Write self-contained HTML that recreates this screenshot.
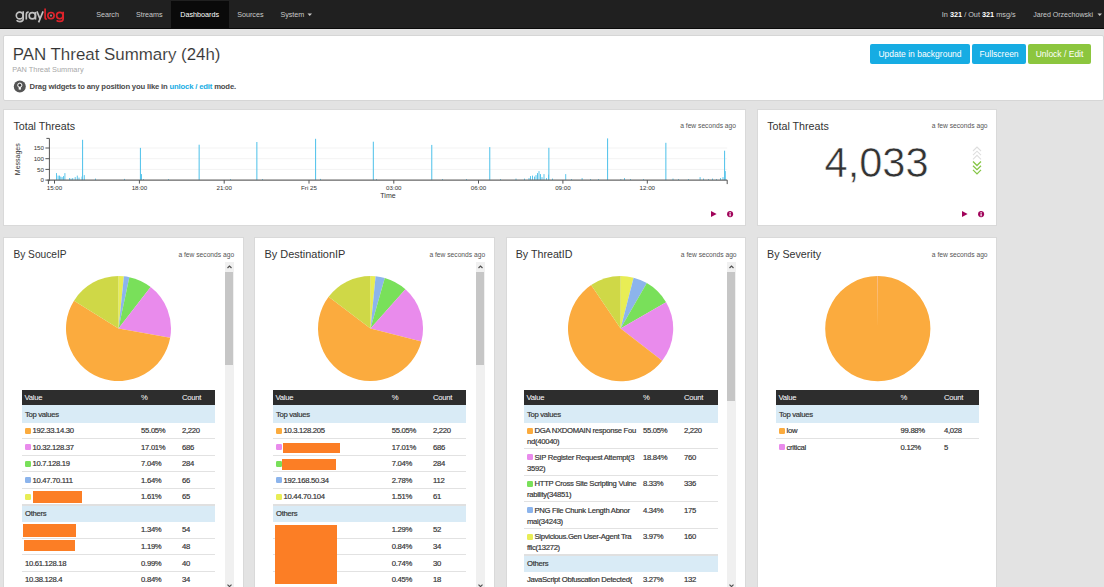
<!DOCTYPE html><html><head><meta charset="utf-8"><style>
html,body{margin:0;padding:0;width:1104px;height:587px;overflow:hidden;background:#e3e3e3;font-family:"Liberation Sans", sans-serif;}
.t{position:absolute;white-space:nowrap;}
.r{position:absolute;}
svg{position:absolute;}
</style></head><body>
<div class="r" style="left:0px;top:0px;width:1104px;height:28px;background:#202020;"></div>
<div class="r" style="left:0px;top:28px;width:1104px;height:1px;background:#0a0a0a;"></div>
<div class="r" style="left:171px;top:1px;width:58px;height:27px;background:#0a0a0a;"></div>
<svg style="left:0;top:0" width="80" height="28" fill="none" stroke-width="1.65" stroke-linecap="butt"><g stroke="#c2c2c2"><circle cx="19.7" cy="15.5" r="3.4"/><path d="M23.2 11.3 L23.2 19 C23.2 21.2 21.8 21.6 19.8 21.6 C18.3 21.6 17.3 21.1 16.6 20.3"/><path d="M26.3 19.6 L26.3 14.4 C26.3 12.6 27.3 12 28.7 12"/><circle cx="32.3" cy="15.7" r="3.1"/><path d="M35.5 11.9 L35.5 19.6"/><path d="M36.9 11.4 L39.9 18.6 M43.1 11.4 L38.6 22.4"/></g><g stroke="#e1232b"><path d="M45.1 8.5 L45.1 17.4 C45.1 18.6 45.6 19.1 46.8 19.1"/><circle cx="51" cy="15.6" r="3.15"/><circle cx="59.8" cy="15.5" r="3.2"/><path d="M63.2 11.7 L63.2 18.7 C63.2 20.9 61.9 21.4 59.9 21.4 C58.4 21.4 57.3 21 56.6 20.3"/></g><circle cx="51" cy="15.6" r="1.1" fill="#8a8a8a" stroke="none"/></svg>
<svg style="left:307px;top:13px" width="6" height="4"><path d="M0.5 0.5 L5 0.5 L2.75 3 Z" fill="#c9c9c9"/></svg>
<svg style="left:1096.5px;top:13px" width="6" height="4"><path d="M0.5 0.5 L5 0.5 L2.75 3 Z" fill="#c9c9c9"/></svg>
<div class="r" style="left:3px;top:35px;width:1099px;height:64px;background:#fff;border:1px solid #d6d6d6;border-radius:2px"></div>
<svg style="left:13px;top:80px" width="14" height="14"><circle cx="6.8" cy="6.5" r="6" fill="#555"/><circle cx="6.8" cy="5.2" r="2.1" fill="none" stroke="#fff" stroke-width="1"/><circle cx="6.8" cy="5.2" r="0.9" fill="#333"/><rect x="5.7" y="7.2" width="2.2" height="2.4" fill="#fff"/></svg>
<div class="r" style="left:870px;top:44px;width:100px;height:20px;background:#16ace3;border-radius:2px"></div>
<div class="r" style="left:972px;top:44px;width:54px;height:20px;background:#16ace3;border-radius:2px"></div>
<div class="r" style="left:1028px;top:44px;width:63px;height:20px;background:#8cc63e;border-radius:2px"></div>
<div class="r" style="left:3px;top:109px;width:741px;height:115px;background:#fff;border:1px solid #d9d9d9"></div>
<div class="r" style="left:757px;top:109px;width:238px;height:115px;background:#fff;border:1px solid #d9d9d9"></div>
<div class="r" style="left:3px;top:237px;width:239px;height:361px;background:#fff;border:1px solid #d9d9d9"></div>
<div class="r" style="left:254px;top:237px;width:239px;height:361px;background:#fff;border:1px solid #d9d9d9"></div>
<div class="r" style="left:506px;top:237px;width:238px;height:361px;background:#fff;border:1px solid #d9d9d9"></div>
<div class="r" style="left:757px;top:237px;width:238px;height:361px;background:#fff;border:1px solid #d9d9d9"></div>
<svg style="left:0;top:0" width="1104" height="240"><line x1="49.4" x2="727.2" y1="169.4" y2="169.4" stroke="#f3f3f3" stroke-width="1"/><line x1="49.4" x2="727.2" y1="158.7" y2="158.7" stroke="#f3f3f3" stroke-width="1"/><line x1="49.4" x2="727.2" y1="148.0" y2="148.0" stroke="#f3f3f3" stroke-width="1"/><rect x="82.0" y="139.8" width="1.1" height="40.3" fill="#5cc6ec"/><rect x="139.9" y="147.9" width="1.1" height="32.2" fill="#5cc6ec"/><rect x="198.6" y="144.7" width="1.1" height="35.4" fill="#5cc6ec"/><rect x="256.3" y="142.0" width="1.1" height="38.1" fill="#5cc6ec"/><rect x="315.0" y="138.8" width="1.1" height="41.3" fill="#5cc6ec"/><rect x="372.8" y="141.7" width="1.1" height="38.4" fill="#5cc6ec"/><rect x="431.2" y="144.9" width="1.1" height="35.2" fill="#5cc6ec"/><rect x="489.2" y="147.1" width="1.1" height="33.0" fill="#5cc6ec"/><rect x="548.3" y="147.8" width="1.1" height="32.3" fill="#5cc6ec"/><rect x="607.0" y="138.4" width="1.1" height="41.7" fill="#5cc6ec"/><rect x="665.3" y="142.8" width="1.1" height="37.3" fill="#5cc6ec"/><rect x="724.0" y="150.7" width="1.1" height="29.4" fill="#5cc6ec"/><rect x="56.0" y="173.1" width="1" height="7.0" fill="#5cc6ec"/><rect x="57.6" y="175.6" width="1" height="4.5" fill="#5cc6ec"/><rect x="59.0" y="175.6" width="1" height="4.5" fill="#5cc6ec"/><rect x="60.3" y="176.6" width="1" height="3.5" fill="#5cc6ec"/><rect x="61.6" y="177.1" width="1" height="3.0" fill="#5cc6ec"/><rect x="63.0" y="176.1" width="1" height="4.0" fill="#5cc6ec"/><rect x="64.4" y="173.1" width="1" height="7.0" fill="#5cc6ec"/><rect x="69.0" y="178.1" width="1" height="2.0" fill="#5cc6ec"/><rect x="70.5" y="178.6" width="1" height="1.5" fill="#5cc6ec"/><rect x="72.2" y="178.1" width="1" height="2.0" fill="#5cc6ec"/><rect x="74.7" y="177.1" width="1" height="3.0" fill="#5cc6ec"/><rect x="76.8" y="175.6" width="1" height="4.5" fill="#5cc6ec"/><rect x="78.5" y="177.6" width="1" height="2.5" fill="#5cc6ec"/><rect x="81.5" y="176.6" width="1" height="3.5" fill="#5cc6ec"/><rect x="83.8" y="175.1" width="1" height="5.0" fill="#5cc6ec"/><rect x="95.0" y="178.6" width="1" height="1.5" fill="#5cc6ec"/><rect x="124.0" y="178.9" width="1" height="1.2" fill="#5cc6ec"/><rect x="141.0" y="174.1" width="1" height="6.0" fill="#5cc6ec"/><rect x="143.0" y="179.1" width="1" height="1.0" fill="#5cc6ec"/><rect x="168.0" y="179.1" width="1" height="1.0" fill="#5cc6ec"/><rect x="230.0" y="179.1" width="1" height="1.0" fill="#5cc6ec"/><rect x="262.0" y="179.1" width="1" height="1.0" fill="#5cc6ec"/><rect x="320.0" y="178.9" width="1" height="1.2" fill="#5cc6ec"/><rect x="376.0" y="179.1" width="1" height="1.0" fill="#5cc6ec"/><rect x="442.0" y="179.1" width="1" height="1.0" fill="#5cc6ec"/><rect x="466.0" y="179.1" width="1" height="1.0" fill="#5cc6ec"/><rect x="500.0" y="179.1" width="1" height="1.0" fill="#5cc6ec"/><rect x="515.5" y="178.6" width="1" height="1.5" fill="#5cc6ec"/><rect x="524.0" y="178.6" width="1" height="1.5" fill="#5cc6ec"/><rect x="528.5" y="178.1" width="1" height="2.0" fill="#5cc6ec"/><rect x="530.0" y="176.1" width="1" height="4.0" fill="#5cc6ec"/><rect x="532.0" y="175.6" width="1" height="4.5" fill="#5cc6ec"/><rect x="534.0" y="176.6" width="1" height="3.5" fill="#5cc6ec"/><rect x="535.5" y="175.1" width="1" height="5.0" fill="#5cc6ec"/><rect x="537.0" y="173.1" width="1" height="7.0" fill="#5cc6ec"/><rect x="538.5" y="171.1" width="1" height="9.0" fill="#5cc6ec"/><rect x="540.0" y="174.1" width="1" height="6.0" fill="#5cc6ec"/><rect x="541.5" y="177.1" width="1" height="3.0" fill="#5cc6ec"/><rect x="543.5" y="174.1" width="1" height="6.0" fill="#5cc6ec"/><rect x="546.0" y="178.1" width="1" height="2.0" fill="#5cc6ec"/><rect x="548.0" y="174.6" width="1" height="5.5" fill="#5cc6ec"/><rect x="552.0" y="178.6" width="1" height="1.5" fill="#5cc6ec"/><rect x="565.2" y="174.1" width="1" height="6.0" fill="#5cc6ec"/><rect x="571.0" y="179.1" width="1" height="1.0" fill="#5cc6ec"/><rect x="581.6" y="178.1" width="1" height="2.0" fill="#5cc6ec"/><rect x="590.0" y="179.1" width="1" height="1.0" fill="#5cc6ec"/><rect x="598.0" y="179.1" width="1" height="1.0" fill="#5cc6ec"/><rect x="620.3" y="179.1" width="1" height="1.0" fill="#5cc6ec"/><rect x="624.0" y="178.1" width="1" height="2.0" fill="#5cc6ec"/><rect x="630.0" y="179.1" width="1" height="1.0" fill="#5cc6ec"/><rect x="643.0" y="179.1" width="1" height="1.0" fill="#5cc6ec"/><rect x="672.5" y="178.6" width="1" height="1.5" fill="#5cc6ec"/><rect x="678.0" y="179.1" width="1" height="1.0" fill="#5cc6ec"/><rect x="688.0" y="179.1" width="1" height="1.0" fill="#5cc6ec"/><rect x="699.6" y="177.1" width="1" height="3.0" fill="#5cc6ec"/><rect x="703.0" y="178.6" width="1" height="1.5" fill="#5cc6ec"/><rect x="708.0" y="179.1" width="1" height="1.0" fill="#5cc6ec"/><rect x="712.0" y="178.6" width="1" height="1.5" fill="#5cc6ec"/><rect x="716.0" y="179.1" width="1" height="1.0" fill="#5cc6ec"/><rect x="720.0" y="178.1" width="1" height="2.0" fill="#5cc6ec"/><rect x="722.5" y="177.1" width="1" height="3.0" fill="#5cc6ec"/><rect x="724.8" y="171.1" width="1" height="9.0" fill="#5cc6ec"/><line x1="49.4" x2="49.4" y1="138.4" y2="181.1" stroke="#555" stroke-width="1"/><line x1="46.4" x2="49.4" y1="138.4" y2="138.4" stroke="#555" stroke-width="1"/><line x1="47.4" x2="727.2" y1="180.1" y2="180.1" stroke="#666" stroke-width="1.3"/><line x1="727.2" x2="727.2" y1="180.1" y2="184.1" stroke="#555" stroke-width="1"/><line x1="48.4" x2="48.4" y1="180.1" y2="184.1" stroke="#555" stroke-width="1"/><line x1="45.4" x2="49.4" y1="180.1" y2="180.1" stroke="#555" stroke-width="1"/><line x1="45.4" x2="49.4" y1="169.4" y2="169.4" stroke="#555" stroke-width="1"/><line x1="45.4" x2="49.4" y1="158.7" y2="158.7" stroke="#555" stroke-width="1"/><line x1="45.4" x2="49.4" y1="148.0" y2="148.0" stroke="#555" stroke-width="1"/><line x1="54.5" x2="54.5" y1="180.1" y2="183.6" stroke="#555" stroke-width="1"/><line x1="139.4" x2="139.4" y1="180.1" y2="183.6" stroke="#555" stroke-width="1"/><line x1="224.2" x2="224.2" y1="180.1" y2="183.6" stroke="#555" stroke-width="1"/><line x1="309" x2="309" y1="180.1" y2="183.6" stroke="#555" stroke-width="1"/><line x1="393.8" x2="393.8" y1="180.1" y2="183.6" stroke="#555" stroke-width="1"/><line x1="478.5" x2="478.5" y1="180.1" y2="183.6" stroke="#555" stroke-width="1"/><line x1="562.9" x2="562.9" y1="180.1" y2="183.6" stroke="#555" stroke-width="1"/><line x1="647.3" x2="647.3" y1="180.1" y2="183.6" stroke="#555" stroke-width="1"/></svg>
<svg style="left:710.9px;top:210.9px" width="8" height="8"><path d="M0 0 L5.6 3.05 L0 6.1 Z" fill="#a1035a"/></svg>
<svg style="left:726.8px;top:210.9px" width="8" height="8"><circle cx="3.1" cy="3.05" r="3.1" fill="#a1035a"/><rect x="2.5" y="2.4" width="1.2" height="2.9" fill="#fff"/><rect x="2.5" y="0.9" width="1.2" height="1" fill="#fff"/></svg>
<svg style="left:962.2px;top:211px" width="8" height="8"><path d="M0 0 L5.6 3.05 L0 6.1 Z" fill="#a1035a"/></svg>
<svg style="left:978px;top:211px" width="8" height="8"><circle cx="3.1" cy="3.05" r="3.1" fill="#a1035a"/><rect x="2.5" y="2.4" width="1.2" height="2.9" fill="#fff"/><rect x="2.5" y="0.9" width="1.2" height="1" fill="#fff"/></svg>
<svg style="left:971px;top:145px" width="12" height="31"><path d="M2 6.0 L6 2.0 L10 6.0" stroke="#dedede" stroke-width="1.1" fill="none"/><path d="M2 10.2 L6 6.2 L10 10.2" stroke="#dedede" stroke-width="1.1" fill="none"/><path d="M2 14.4 L6 10.4 L10 14.4" stroke="#dedede" stroke-width="1.1" fill="none"/><path d="M2 16.5 L6 20.5 L10 16.5" stroke="#85c544" stroke-width="1.25" fill="none"/><path d="M2 20.7 L6 24.7 L10 20.7" stroke="#85c544" stroke-width="1.25" fill="none"/><path d="M2 24.9 L6 28.9 L10 24.9" stroke="#85c544" stroke-width="1.25" fill="none"/></svg>
<svg style="left:65.0px;top:275.2px" width="107.0" height="107.0"><path d="M53.5 53.5 L53.50 1.00 A52.5 52.5 0 0 1 58.90 1.28 Z" fill="#e8ed55" /><path d="M53.5 53.5 L58.90 1.28 A52.5 52.5 0 0 1 64.34 2.13 Z" fill="#8cb4ec" /><path d="M53.5 53.5 L64.34 2.13 A52.5 52.5 0 0 1 85.64 11.98 Z" fill="#79e05a" /><path d="M53.5 53.5 L85.64 11.98 A52.5 52.5 0 0 1 105.18 62.73 Z" fill="#e98bec" /><path d="M53.5 53.5 L105.18 62.73 A52.5 52.5 0 1 1 9.00 25.65 Z" fill="#fbab3e" /><path d="M53.5 53.5 L9.00 25.65 A52.5 52.5 0 0 1 53.50 1.00 Z" fill="#cfd847" /></svg>
<svg style="left:316.5px;top:275.2px" width="107.0" height="107.0"><path d="M53.5 53.5 L53.50 1.00 A52.5 52.5 0 0 1 58.59 1.25 Z" fill="#e8ed55" /><path d="M53.5 53.5 L58.59 1.25 A52.5 52.5 0 0 1 67.79 2.98 Z" fill="#8cb4ec" /><path d="M53.5 53.5 L67.79 2.98 A52.5 52.5 0 0 1 88.44 14.32 Z" fill="#79e05a" /><path d="M53.5 53.5 L88.44 14.32 A52.5 52.5 0 0 1 104.36 66.52 Z" fill="#e98bec" /><path d="M53.5 53.5 L104.36 66.52 A52.5 52.5 0 1 1 11.62 21.85 Z" fill="#fbab3e" /><path d="M53.5 53.5 L11.62 21.85 A52.5 52.5 0 0 1 53.50 1.00 Z" fill="#cfd847" /></svg>
<svg style="left:567.4px;top:275.1px" width="107.2" height="107.2"><path d="M53.6 53.6 L53.60 1.00 A52.6 52.6 0 0 1 66.59 2.63 Z" fill="#e8ed55" /><path d="M53.6 53.6 L66.59 2.63 A52.6 52.6 0 0 1 79.83 8.01 Z" fill="#8cb4ec" /><path d="M53.6 53.6 L79.83 8.01 A52.6 52.6 0 0 1 99.11 27.22 Z" fill="#79e05a" /><path d="M53.6 53.6 L99.11 27.22 A52.6 52.6 0 0 1 95.20 85.79 Z" fill="#e98bec" /><path d="M53.6 53.6 L95.20 85.79 A52.6 52.6 0 1 1 24.12 10.04 Z" fill="#fbab3e" /><path d="M53.6 53.6 L24.12 10.04 A52.6 52.6 0 0 1 53.60 1.00 Z" fill="#cfd847" /></svg>
<svg style="left:823.6px;top:274.9px" width="107.2" height="107.2"><path d="M53.6 53.6 L53.60 1.00 A52.6 52.6 0 0 1 54.00 1.00 Z" fill="#e98bec" /><path d="M53.6 53.6 L54.00 1.00 A52.6 52.6 0 1 1 53.60 1.00 Z" fill="#fbab3e" /></svg>
<div class="r" style="left:224.5px;top:262px;width:9.0px;height:338px;background:#f0f0f0;"></div>
<div class="r" style="left:225.0px;top:271.5px;width:8.0px;height:93.5px;background:#c6c6c6;"></div>
<svg style="left:224.5px;top:263px" width="9" height="8"><path d="M2.5 5 L4.5 3 L6.5 5" stroke="#505050" stroke-width="1.2" fill="none"/></svg>
<svg style="left:224.5px;top:580px" width="9" height="7"><path d="M2.5 4.6 L4.5 6.6 L6.5 4.6" stroke="#505050" stroke-width="1.2" fill="none"/></svg>
<div class="r" style="left:475.8px;top:262px;width:9.0px;height:338px;background:#f0f0f0;"></div>
<div class="r" style="left:476.3px;top:271.5px;width:8.0px;height:93.5px;background:#c6c6c6;"></div>
<svg style="left:475.8px;top:263px" width="9" height="8"><path d="M2.5 5 L4.5 3 L6.5 5" stroke="#505050" stroke-width="1.2" fill="none"/></svg>
<svg style="left:475.8px;top:580px" width="9" height="7"><path d="M2.5 4.6 L4.5 6.6 L6.5 4.6" stroke="#505050" stroke-width="1.2" fill="none"/></svg>
<div class="r" style="left:726.9px;top:262px;width:9.0px;height:338px;background:#f0f0f0;"></div>
<div class="r" style="left:727.4px;top:271.5px;width:8.0px;height:129.0px;background:#c6c6c6;"></div>
<svg style="left:726.9px;top:263px" width="9" height="8"><path d="M2.5 5 L4.5 3 L6.5 5" stroke="#505050" stroke-width="1.2" fill="none"/></svg>
<svg style="left:726.9px;top:580px" width="9" height="7"><path d="M2.5 4.6 L4.5 6.6 L6.5 4.6" stroke="#505050" stroke-width="1.2" fill="none"/></svg>
<div class="r" style="left:22px;top:390px;width:193px;height:15px;background:#2d2d2d;"></div>
<div class="r" style="left:22px;top:405px;width:193px;height:18px;background:#d9ebf6;"></div>
<div class="r" style="left:22px;top:438px;width:193px;height:1px;background:#e2e2e2;"></div>
<div class="r" style="left:25px;top:428px;width:5.699999999999999px;height:5.600000000000023px;background:#fbab3e;border-radius:1.2px"></div>
<div class="r" style="left:22px;top:455px;width:193px;height:1px;background:#e2e2e2;"></div>
<div class="r" style="left:25px;top:444px;width:5.699999999999999px;height:5.600000000000023px;background:#e98bec;border-radius:1.2px"></div>
<div class="r" style="left:22px;top:471px;width:193px;height:1px;background:#e2e2e2;"></div>
<div class="r" style="left:25px;top:461px;width:5.699999999999999px;height:5.600000000000023px;background:#79e05a;border-radius:1.2px"></div>
<div class="r" style="left:22px;top:488px;width:193px;height:1px;background:#e2e2e2;"></div>
<div class="r" style="left:25px;top:477px;width:5.699999999999999px;height:5.600000000000023px;background:#8cb4ec;border-radius:1.2px"></div>
<div class="r" style="left:22px;top:505px;width:193px;height:1px;background:#e2e2e2;"></div>
<div class="r" style="left:25px;top:494px;width:5.699999999999999px;height:5.600000000000023px;background:#e8ed55;border-radius:1.2px"></div>
<div class="r" style="left:33px;top:491px;width:49px;height:12px;background:#fc7e25;"></div>
<div class="r" style="left:22px;top:504px;width:193px;height:2px;background:#e0e0e0;"></div>
<div class="r" style="left:22px;top:506px;width:193px;height:16px;background:#d9ebf6;"></div>
<div class="r" style="left:22px;top:538px;width:193px;height:1px;background:#e2e2e2;"></div>
<div class="r" style="left:23px;top:524px;width:53px;height:13px;background:#fc7e25;"></div>
<div class="r" style="left:22px;top:554px;width:193px;height:1px;background:#e2e2e2;"></div>
<div class="r" style="left:24px;top:540px;width:51px;height:11px;background:#fc7e25;"></div>
<div class="r" style="left:22px;top:571px;width:193px;height:1px;background:#e2e2e2;"></div>
<div class="r" style="left:22px;top:587px;width:193px;height:1px;background:#e2e2e2;"></div>
<div class="r" style="left:273px;top:390px;width:193px;height:15px;background:#2d2d2d;"></div>
<div class="r" style="left:273px;top:405px;width:193px;height:18px;background:#d9ebf6;"></div>
<div class="r" style="left:273px;top:438px;width:193px;height:1px;background:#e2e2e2;"></div>
<div class="r" style="left:276px;top:428px;width:5.699999999999989px;height:5.600000000000023px;background:#fbab3e;border-radius:1.2px"></div>
<div class="r" style="left:273px;top:455px;width:193px;height:1px;background:#e2e2e2;"></div>
<div class="r" style="left:276px;top:444px;width:5.699999999999989px;height:5.600000000000023px;background:#e98bec;border-radius:1.2px"></div>
<div class="r" style="left:283.3px;top:443px;width:56.39999999999998px;height:9.5px;background:#fc7e25;"></div>
<div class="r" style="left:273px;top:471px;width:193px;height:1px;background:#e2e2e2;"></div>
<div class="r" style="left:276px;top:461px;width:5.699999999999989px;height:5.600000000000023px;background:#79e05a;border-radius:1.2px"></div>
<div class="r" style="left:282.2px;top:459px;width:53.400000000000034px;height:10.699999999999989px;background:#fc7e25;"></div>
<div class="r" style="left:273px;top:488px;width:193px;height:1px;background:#e2e2e2;"></div>
<div class="r" style="left:276px;top:477px;width:5.699999999999989px;height:5.600000000000023px;background:#8cb4ec;border-radius:1.2px"></div>
<div class="r" style="left:273px;top:505px;width:193px;height:1px;background:#e2e2e2;"></div>
<div class="r" style="left:276px;top:494px;width:5.699999999999989px;height:5.600000000000023px;background:#e8ed55;border-radius:1.2px"></div>
<div class="r" style="left:273px;top:504px;width:193px;height:2px;background:#e0e0e0;"></div>
<div class="r" style="left:273px;top:506px;width:193px;height:16px;background:#d9ebf6;"></div>
<div class="r" style="left:273px;top:538px;width:193px;height:1px;background:#e2e2e2;"></div>
<div class="r" style="left:273px;top:554px;width:193px;height:1px;background:#e2e2e2;"></div>
<div class="r" style="left:273px;top:571px;width:193px;height:1px;background:#e2e2e2;"></div>
<div class="r" style="left:273px;top:587px;width:193px;height:1px;background:#e2e2e2;"></div>
<div class="r" style="left:274.6px;top:524.8px;width:62.69999999999999px;height:59.0px;background:#fc7e25;"></div>
<div class="r" style="left:524px;top:390px;width:193.5px;height:15px;background:#2d2d2d;"></div>
<div class="r" style="left:524px;top:405px;width:193.5px;height:18px;background:#d9ebf6;"></div>
<div class="r" style="left:524px;top:448px;width:193.5px;height:1px;background:#e2e2e2;"></div>
<div class="r" style="left:527px;top:428px;width:5.7000000000000455px;height:5.600000000000023px;background:#fbab3e;border-radius:1.2px"></div>
<div class="r" style="left:524px;top:475px;width:193.5px;height:1px;background:#e2e2e2;"></div>
<div class="r" style="left:527px;top:454px;width:5.7000000000000455px;height:5.600000000000023px;background:#e98bec;border-radius:1.2px"></div>
<div class="r" style="left:524px;top:501px;width:193.5px;height:1px;background:#e2e2e2;"></div>
<div class="r" style="left:527px;top:481px;width:5.7000000000000455px;height:5.600000000000023px;background:#79e05a;border-radius:1.2px"></div>
<div class="r" style="left:524px;top:528px;width:193.5px;height:1px;background:#e2e2e2;"></div>
<div class="r" style="left:527px;top:507px;width:5.7000000000000455px;height:5.600000000000023px;background:#8cb4ec;border-radius:1.2px"></div>
<div class="r" style="left:524px;top:555px;width:193.5px;height:1px;background:#e2e2e2;"></div>
<div class="r" style="left:527px;top:534px;width:5.7000000000000455px;height:5.600000000000023px;background:#e8ed55;border-radius:1.2px"></div>
<div class="r" style="left:524px;top:554px;width:193.5px;height:2px;background:#e0e0e0;"></div>
<div class="r" style="left:524px;top:556px;width:193.5px;height:16px;background:#d9ebf6;"></div>
<div class="r" style="left:524px;top:598px;width:193.5px;height:1px;background:#e2e2e2;"></div>
<div class="r" style="left:776px;top:390px;width:203px;height:15px;background:#2d2d2d;"></div>
<div class="r" style="left:776px;top:405px;width:203px;height:18px;background:#d9ebf6;"></div>
<div class="r" style="left:776px;top:438px;width:203px;height:1px;background:#e2e2e2;"></div>
<div class="r" style="left:779px;top:428px;width:5.7000000000000455px;height:5.600000000000023px;background:#fbab3e;border-radius:1.2px"></div>
<div class="r" style="left:779px;top:444px;width:5.7000000000000455px;height:5.600000000000023px;background:#e98bec;border-radius:1.2px"></div>
<svg style="left:0;top:0" width="1104" height="587" font-family="Liberation Sans, sans-serif" xml:space="preserve"><text id="n_search" x="96.20" y="16.70" font-size="7.20" fill="#c9c9c9" font-weight="normal" text-anchor="start">Search</text><text id="n_streams" x="135.90" y="16.70" font-size="7.20" fill="#c9c9c9" font-weight="normal" text-anchor="start">Streams</text><text id="n_dash" x="180.30" y="16.70" font-size="7.20" fill="#ffffff" font-weight="normal" text-anchor="start">Dashboards</text><text id="n_sources" x="237.20" y="16.70" font-size="7.20" fill="#c9c9c9" font-weight="normal" text-anchor="start">Sources</text><text id="n_system" x="280.40" y="16.70" font-size="7.20" fill="#c9c9c9" font-weight="normal" text-anchor="start">System</text><text id="n_io" x="941.80" y="16.50" font-size="7.30" fill="#c9c9c9" font-weight="normal" text-anchor="start">In <tspan font-weight="bold" fill="#fff">321</tspan> / Out <tspan font-weight="bold" fill="#fff">321</tspan> msg/s</text><text id="n_user" x="1033.20" y="16.50" font-size="7.05" fill="#c9c9c9" font-weight="normal" text-anchor="start">Jared Orzechowski</text><text id="title" x="12.70" y="59.70" font-size="16.90" fill="#333" font-weight="normal" text-anchor="start" stroke="#fff" stroke-width="0.12">PAN Threat Summary (24h)</text><text id="subtitle" x="12.30" y="72.10" font-size="7.37" fill="#a8a8a8" font-weight="normal" text-anchor="start">PAN Threat Summary</text><text id="drag" x="29.60" y="89.00" font-size="7.70" fill="#4a4a4a" font-weight="bold" text-anchor="start" letter-spacing="-0.17">Drag widgets to any position you like in <tspan fill="#16ace3">unlock / edit</tspan> mode.</text><text id="b1" x="920.00" y="57.40" font-size="8.50" fill="#fff" font-weight="normal" text-anchor="middle">Update in background</text><text id="b2" x="999.00" y="57.40" font-size="8.50" fill="#fff" font-weight="normal" text-anchor="middle">Fullscreen</text><text id="b3" x="1059.50" y="57.40" font-size="8.50" fill="#fff" font-weight="normal" text-anchor="middle">Unlock / Edit</text><text id="wt1" x="13.40" y="129.60" font-size="10.70" fill="#333" font-weight="normal" text-anchor="start">Total Threats</text><text id="ago1" x="736.00" y="128.00" font-size="6.70" fill="#555" font-weight="normal" text-anchor="end">a few seconds ago</text><text id="wt2" x="767.20" y="129.60" font-size="10.70" fill="#333" font-weight="normal" text-anchor="start">Total Threats</text><text id="ago2" x="987.60" y="128.00" font-size="6.70" fill="#555" font-weight="normal" text-anchor="end">a few seconds ago</text><text x="44.00" y="182.30" font-size="6.20" fill="#333" font-weight="normal" text-anchor="end">0</text><text x="44.00" y="171.60" font-size="6.20" fill="#333" font-weight="normal" text-anchor="end">50</text><text x="44.00" y="160.90" font-size="6.20" fill="#333" font-weight="normal" text-anchor="end">100</text><text x="44.00" y="150.20" font-size="6.20" fill="#333" font-weight="normal" text-anchor="end">150</text><text x="54.50" y="189.60" font-size="6.20" fill="#333" font-weight="normal" text-anchor="middle">15:00</text><text x="139.40" y="189.60" font-size="6.20" fill="#333" font-weight="normal" text-anchor="middle">18:00</text><text x="224.20" y="189.60" font-size="6.20" fill="#333" font-weight="normal" text-anchor="middle">21:00</text><text x="309.00" y="189.60" font-size="6.20" fill="#333" font-weight="normal" text-anchor="middle">Fri 25</text><text x="393.80" y="189.60" font-size="6.20" fill="#333" font-weight="normal" text-anchor="middle">03:00</text><text x="478.50" y="189.60" font-size="6.20" fill="#333" font-weight="normal" text-anchor="middle">06:00</text><text x="562.90" y="189.60" font-size="6.20" fill="#333" font-weight="normal" text-anchor="middle">09:00</text><text x="647.30" y="189.60" font-size="6.20" fill="#333" font-weight="normal" text-anchor="middle">12:00</text><text id="time" x="388.00" y="197.80" font-size="7.00" fill="#333" font-weight="normal" text-anchor="middle">Time</text><text x="0" y="0" font-size="7" fill="#333" text-anchor="middle" transform="translate(20.2 159.2) rotate(-90)">Messages</text><text id="num" x="876.6" y="177" font-size="41.6" fill="#333" stroke="#fff" stroke-width="0.55" text-anchor="middle">4,033</text><text id="wt3" x="13.40" y="258.40" font-size="10.20" fill="#333" font-weight="normal" text-anchor="start">By SouceIP</text><text id="ago3" x="234.20" y="256.60" font-size="6.70" fill="#555" font-weight="normal" text-anchor="end">a few seconds ago</text><text id="wt4" x="264.50" y="258.40" font-size="10.95" fill="#333" font-weight="normal" text-anchor="start">By DestinationIP</text><text id="ago4" x="485.20" y="256.60" font-size="6.70" fill="#555" font-weight="normal" text-anchor="end">a few seconds ago</text><text id="wt5" x="515.70" y="258.40" font-size="10.70" fill="#333" font-weight="normal" text-anchor="start">By ThreatID</text><text id="ago5" x="736.60" y="256.60" font-size="6.70" fill="#555" font-weight="normal" text-anchor="end">a few seconds ago</text><text id="wt6" x="767.00" y="258.40" font-size="10.70" fill="#333" font-weight="normal" text-anchor="start">By Severity</text><text id="ago6" x="987.60" y="256.60" font-size="6.70" fill="#555" font-weight="normal" text-anchor="end">a few seconds ago</text><text x="24.60" y="400.30" font-size="7.70" fill="#fff" font-weight="normal" text-anchor="start" letter-spacing="-0.3">Value</text><text x="141.10" y="400.30" font-size="7.70" fill="#fff" font-weight="normal" text-anchor="start" letter-spacing="-0.3">%</text><text x="182.00" y="400.30" font-size="7.70" fill="#fff" font-weight="normal" text-anchor="start" letter-spacing="-0.3">Count</text><text x="25.00" y="416.80" font-size="7.70" fill="#333" font-weight="normal" text-anchor="start" letter-spacing="-0.3" stroke="#333" stroke-width="0.18">Top values</text><text x="32.50" y="433.00" font-size="7.70" fill="#333" font-weight="normal" text-anchor="start" letter-spacing="-0.3" stroke="#333" stroke-width="0.18">192.33.14.30</text><text x="141.10" y="433.00" font-size="7.70" fill="#333" font-weight="normal" text-anchor="start" letter-spacing="-0.3" stroke="#333" stroke-width="0.18">55.05%</text><text x="182.00" y="433.00" font-size="7.70" fill="#333" font-weight="normal" text-anchor="start" letter-spacing="-0.3" stroke="#333" stroke-width="0.18">2,220</text><text x="32.50" y="450.00" font-size="7.70" fill="#333" font-weight="normal" text-anchor="start" letter-spacing="-0.3" stroke="#333" stroke-width="0.18">10.32.128.37</text><text x="141.10" y="450.00" font-size="7.70" fill="#333" font-weight="normal" text-anchor="start" letter-spacing="-0.3" stroke="#333" stroke-width="0.18">17.01%</text><text x="182.00" y="450.00" font-size="7.70" fill="#333" font-weight="normal" text-anchor="start" letter-spacing="-0.3" stroke="#333" stroke-width="0.18">686</text><text x="32.50" y="466.00" font-size="7.70" fill="#333" font-weight="normal" text-anchor="start" letter-spacing="-0.3" stroke="#333" stroke-width="0.18">10.7.128.19</text><text x="141.10" y="466.00" font-size="7.70" fill="#333" font-weight="normal" text-anchor="start" letter-spacing="-0.3" stroke="#333" stroke-width="0.18">7.04%</text><text x="182.00" y="466.00" font-size="7.70" fill="#333" font-weight="normal" text-anchor="start" letter-spacing="-0.3" stroke="#333" stroke-width="0.18">284</text><text x="32.50" y="483.00" font-size="7.70" fill="#333" font-weight="normal" text-anchor="start" letter-spacing="-0.3" stroke="#333" stroke-width="0.18">10.47.70.111</text><text x="141.10" y="483.00" font-size="7.70" fill="#333" font-weight="normal" text-anchor="start" letter-spacing="-0.3" stroke="#333" stroke-width="0.18">1.64%</text><text x="182.00" y="483.00" font-size="7.70" fill="#333" font-weight="normal" text-anchor="start" letter-spacing="-0.3" stroke="#333" stroke-width="0.18">66</text><text x="32.50" y="499.00" font-size="7.70" fill="#333" font-weight="normal" text-anchor="start" letter-spacing="-0.3" stroke="#333" stroke-width="0.18"></text><text x="141.10" y="499.00" font-size="7.70" fill="#333" font-weight="normal" text-anchor="start" letter-spacing="-0.3" stroke="#333" stroke-width="0.18">1.61%</text><text x="182.00" y="499.00" font-size="7.70" fill="#333" font-weight="normal" text-anchor="start" letter-spacing="-0.3" stroke="#333" stroke-width="0.18">65</text><text x="25.00" y="516.40" font-size="7.70" fill="#333" font-weight="normal" text-anchor="start" letter-spacing="-0.3" stroke="#333" stroke-width="0.18">Others</text><text x="25.00" y="532.00" font-size="7.70" fill="#333" font-weight="normal" text-anchor="start" letter-spacing="-0.3" stroke="#333" stroke-width="0.18"></text><text x="141.10" y="532.00" font-size="7.70" fill="#333" font-weight="normal" text-anchor="start" letter-spacing="-0.3" stroke="#333" stroke-width="0.18">1.34%</text><text x="182.00" y="532.00" font-size="7.70" fill="#333" font-weight="normal" text-anchor="start" letter-spacing="-0.3" stroke="#333" stroke-width="0.18">54</text><text x="25.00" y="549.00" font-size="7.70" fill="#333" font-weight="normal" text-anchor="start" letter-spacing="-0.3" stroke="#333" stroke-width="0.18"></text><text x="141.10" y="549.00" font-size="7.70" fill="#333" font-weight="normal" text-anchor="start" letter-spacing="-0.3" stroke="#333" stroke-width="0.18">1.19%</text><text x="182.00" y="549.00" font-size="7.70" fill="#333" font-weight="normal" text-anchor="start" letter-spacing="-0.3" stroke="#333" stroke-width="0.18">48</text><text x="25.00" y="566.00" font-size="7.70" fill="#333" font-weight="normal" text-anchor="start" letter-spacing="-0.3" stroke="#333" stroke-width="0.18">10.61.128.18</text><text x="141.10" y="566.00" font-size="7.70" fill="#333" font-weight="normal" text-anchor="start" letter-spacing="-0.3" stroke="#333" stroke-width="0.18">0.99%</text><text x="182.00" y="566.00" font-size="7.70" fill="#333" font-weight="normal" text-anchor="start" letter-spacing="-0.3" stroke="#333" stroke-width="0.18">40</text><text x="25.00" y="582.00" font-size="7.70" fill="#333" font-weight="normal" text-anchor="start" letter-spacing="-0.3" stroke="#333" stroke-width="0.18">10.38.128.4</text><text x="141.10" y="582.00" font-size="7.70" fill="#333" font-weight="normal" text-anchor="start" letter-spacing="-0.3" stroke="#333" stroke-width="0.18">0.84%</text><text x="182.00" y="582.00" font-size="7.70" fill="#333" font-weight="normal" text-anchor="start" letter-spacing="-0.3" stroke="#333" stroke-width="0.18">34</text><text x="275.60" y="400.30" font-size="7.70" fill="#fff" font-weight="normal" text-anchor="start" letter-spacing="-0.3">Value</text><text x="391.70" y="400.30" font-size="7.70" fill="#fff" font-weight="normal" text-anchor="start" letter-spacing="-0.3">%</text><text x="433.00" y="400.30" font-size="7.70" fill="#fff" font-weight="normal" text-anchor="start" letter-spacing="-0.3">Count</text><text x="276.00" y="416.80" font-size="7.70" fill="#333" font-weight="normal" text-anchor="start" letter-spacing="-0.3" stroke="#333" stroke-width="0.18">Top values</text><text x="283.50" y="433.00" font-size="7.70" fill="#333" font-weight="normal" text-anchor="start" letter-spacing="-0.3" stroke="#333" stroke-width="0.18">10.3.128.205</text><text x="391.70" y="433.00" font-size="7.70" fill="#333" font-weight="normal" text-anchor="start" letter-spacing="-0.3" stroke="#333" stroke-width="0.18">55.05%</text><text x="433.00" y="433.00" font-size="7.70" fill="#333" font-weight="normal" text-anchor="start" letter-spacing="-0.3" stroke="#333" stroke-width="0.18">2,220</text><text x="283.50" y="450.00" font-size="7.70" fill="#333" font-weight="normal" text-anchor="start" letter-spacing="-0.3" stroke="#333" stroke-width="0.18"></text><text x="391.70" y="450.00" font-size="7.70" fill="#333" font-weight="normal" text-anchor="start" letter-spacing="-0.3" stroke="#333" stroke-width="0.18">17.01%</text><text x="433.00" y="450.00" font-size="7.70" fill="#333" font-weight="normal" text-anchor="start" letter-spacing="-0.3" stroke="#333" stroke-width="0.18">686</text><text x="283.50" y="466.00" font-size="7.70" fill="#333" font-weight="normal" text-anchor="start" letter-spacing="-0.3" stroke="#333" stroke-width="0.18"></text><text x="391.70" y="466.00" font-size="7.70" fill="#333" font-weight="normal" text-anchor="start" letter-spacing="-0.3" stroke="#333" stroke-width="0.18">7.04%</text><text x="433.00" y="466.00" font-size="7.70" fill="#333" font-weight="normal" text-anchor="start" letter-spacing="-0.3" stroke="#333" stroke-width="0.18">284</text><text x="283.50" y="483.00" font-size="7.70" fill="#333" font-weight="normal" text-anchor="start" letter-spacing="-0.3" stroke="#333" stroke-width="0.18">192.168.50.34</text><text x="391.70" y="483.00" font-size="7.70" fill="#333" font-weight="normal" text-anchor="start" letter-spacing="-0.3" stroke="#333" stroke-width="0.18">2.78%</text><text x="433.00" y="483.00" font-size="7.70" fill="#333" font-weight="normal" text-anchor="start" letter-spacing="-0.3" stroke="#333" stroke-width="0.18">112</text><text x="283.50" y="499.00" font-size="7.70" fill="#333" font-weight="normal" text-anchor="start" letter-spacing="-0.3" stroke="#333" stroke-width="0.18">10.44.70.104</text><text x="391.70" y="499.00" font-size="7.70" fill="#333" font-weight="normal" text-anchor="start" letter-spacing="-0.3" stroke="#333" stroke-width="0.18">1.51%</text><text x="433.00" y="499.00" font-size="7.70" fill="#333" font-weight="normal" text-anchor="start" letter-spacing="-0.3" stroke="#333" stroke-width="0.18">61</text><text x="276.00" y="516.40" font-size="7.70" fill="#333" font-weight="normal" text-anchor="start" letter-spacing="-0.3" stroke="#333" stroke-width="0.18">Others</text><text x="276.00" y="532.00" font-size="7.70" fill="#333" font-weight="normal" text-anchor="start" letter-spacing="-0.3" stroke="#333" stroke-width="0.18"></text><text x="391.70" y="532.00" font-size="7.70" fill="#333" font-weight="normal" text-anchor="start" letter-spacing="-0.3" stroke="#333" stroke-width="0.18">1.29%</text><text x="433.00" y="532.00" font-size="7.70" fill="#333" font-weight="normal" text-anchor="start" letter-spacing="-0.3" stroke="#333" stroke-width="0.18">52</text><text x="276.00" y="549.00" font-size="7.70" fill="#333" font-weight="normal" text-anchor="start" letter-spacing="-0.3" stroke="#333" stroke-width="0.18"></text><text x="391.70" y="549.00" font-size="7.70" fill="#333" font-weight="normal" text-anchor="start" letter-spacing="-0.3" stroke="#333" stroke-width="0.18">0.84%</text><text x="433.00" y="549.00" font-size="7.70" fill="#333" font-weight="normal" text-anchor="start" letter-spacing="-0.3" stroke="#333" stroke-width="0.18">34</text><text x="276.00" y="566.00" font-size="7.70" fill="#333" font-weight="normal" text-anchor="start" letter-spacing="-0.3" stroke="#333" stroke-width="0.18"></text><text x="391.70" y="566.00" font-size="7.70" fill="#333" font-weight="normal" text-anchor="start" letter-spacing="-0.3" stroke="#333" stroke-width="0.18">0.74%</text><text x="433.00" y="566.00" font-size="7.70" fill="#333" font-weight="normal" text-anchor="start" letter-spacing="-0.3" stroke="#333" stroke-width="0.18">30</text><text x="276.00" y="582.00" font-size="7.70" fill="#333" font-weight="normal" text-anchor="start" letter-spacing="-0.3" stroke="#333" stroke-width="0.18"></text><text x="391.70" y="582.00" font-size="7.70" fill="#333" font-weight="normal" text-anchor="start" letter-spacing="-0.3" stroke="#333" stroke-width="0.18">0.45%</text><text x="433.00" y="582.00" font-size="7.70" fill="#333" font-weight="normal" text-anchor="start" letter-spacing="-0.3" stroke="#333" stroke-width="0.18">18</text><text x="526.60" y="400.30" font-size="7.70" fill="#fff" font-weight="normal" text-anchor="start" letter-spacing="-0.3">Value</text><text x="643.00" y="400.30" font-size="7.70" fill="#fff" font-weight="normal" text-anchor="start" letter-spacing="-0.3">%</text><text x="684.00" y="400.30" font-size="7.70" fill="#fff" font-weight="normal" text-anchor="start" letter-spacing="-0.3">Count</text><text x="527.00" y="416.80" font-size="7.70" fill="#333" font-weight="normal" text-anchor="start" letter-spacing="-0.3" stroke="#333" stroke-width="0.18">Top values</text><text x="534.50" y="433.00" font-size="7.70" fill="#333" font-weight="normal" text-anchor="start" letter-spacing="-0.3" stroke="#333" stroke-width="0.18">DGA NXDOMAIN response Fou</text><text x="527.00" y="443.50" font-size="7.70" fill="#333" font-weight="normal" text-anchor="start" letter-spacing="-0.3" stroke="#333" stroke-width="0.18">nd(40040)</text><text x="643.00" y="433.00" font-size="7.70" fill="#333" font-weight="normal" text-anchor="start" letter-spacing="-0.3" stroke="#333" stroke-width="0.18">55.05%</text><text x="684.00" y="433.00" font-size="7.70" fill="#333" font-weight="normal" text-anchor="start" letter-spacing="-0.3" stroke="#333" stroke-width="0.18">2,220</text><text x="534.50" y="460.00" font-size="7.70" fill="#333" font-weight="normal" text-anchor="start" letter-spacing="-0.3" stroke="#333" stroke-width="0.18">SIP Register Request Attempt(3</text><text x="527.00" y="470.50" font-size="7.70" fill="#333" font-weight="normal" text-anchor="start" letter-spacing="-0.3" stroke="#333" stroke-width="0.18">3592)</text><text x="643.00" y="460.00" font-size="7.70" fill="#333" font-weight="normal" text-anchor="start" letter-spacing="-0.3" stroke="#333" stroke-width="0.18">18.84%</text><text x="684.00" y="460.00" font-size="7.70" fill="#333" font-weight="normal" text-anchor="start" letter-spacing="-0.3" stroke="#333" stroke-width="0.18">760</text><text x="534.50" y="486.00" font-size="7.70" fill="#333" font-weight="normal" text-anchor="start" letter-spacing="-0.3" stroke="#333" stroke-width="0.18">HTTP Cross Site Scripting Vulne</text><text x="527.00" y="496.50" font-size="7.70" fill="#333" font-weight="normal" text-anchor="start" letter-spacing="-0.3" stroke="#333" stroke-width="0.18">rability(34851)</text><text x="643.00" y="486.00" font-size="7.70" fill="#333" font-weight="normal" text-anchor="start" letter-spacing="-0.3" stroke="#333" stroke-width="0.18">8.33%</text><text x="684.00" y="486.00" font-size="7.70" fill="#333" font-weight="normal" text-anchor="start" letter-spacing="-0.3" stroke="#333" stroke-width="0.18">336</text><text x="534.50" y="513.00" font-size="7.70" fill="#333" font-weight="normal" text-anchor="start" letter-spacing="-0.3" stroke="#333" stroke-width="0.18">PNG File Chunk Length Abnor</text><text x="527.00" y="523.50" font-size="7.70" fill="#333" font-weight="normal" text-anchor="start" letter-spacing="-0.3" stroke="#333" stroke-width="0.18">mal(34243)</text><text x="643.00" y="513.00" font-size="7.70" fill="#333" font-weight="normal" text-anchor="start" letter-spacing="-0.3" stroke="#333" stroke-width="0.18">4.34%</text><text x="684.00" y="513.00" font-size="7.70" fill="#333" font-weight="normal" text-anchor="start" letter-spacing="-0.3" stroke="#333" stroke-width="0.18">175</text><text x="534.50" y="539.00" font-size="7.70" fill="#333" font-weight="normal" text-anchor="start" letter-spacing="-0.3" stroke="#333" stroke-width="0.18">Sipvicious.Gen User-Agent Tra</text><text x="527.00" y="549.50" font-size="7.70" fill="#333" font-weight="normal" text-anchor="start" letter-spacing="-0.3" stroke="#333" stroke-width="0.18">ffic(13272)</text><text x="643.00" y="539.00" font-size="7.70" fill="#333" font-weight="normal" text-anchor="start" letter-spacing="-0.3" stroke="#333" stroke-width="0.18">3.97%</text><text x="684.00" y="539.00" font-size="7.70" fill="#333" font-weight="normal" text-anchor="start" letter-spacing="-0.3" stroke="#333" stroke-width="0.18">160</text><text x="527.00" y="566.40" font-size="7.70" fill="#333" font-weight="normal" text-anchor="start" letter-spacing="-0.3" stroke="#333" stroke-width="0.18">Others</text><text x="527.00" y="582.00" font-size="7.70" fill="#333" font-weight="normal" text-anchor="start" letter-spacing="-0.3" stroke="#333" stroke-width="0.18">JavaScript Obfuscation Detected(</text><text x="643.00" y="582.00" font-size="7.70" fill="#333" font-weight="normal" text-anchor="start" letter-spacing="-0.3" stroke="#333" stroke-width="0.18">3.27%</text><text x="684.00" y="582.00" font-size="7.70" fill="#333" font-weight="normal" text-anchor="start" letter-spacing="-0.3" stroke="#333" stroke-width="0.18">132</text><text x="778.60" y="400.30" font-size="7.70" fill="#fff" font-weight="normal" text-anchor="start" letter-spacing="-0.3">Value</text><text x="900.60" y="400.30" font-size="7.70" fill="#fff" font-weight="normal" text-anchor="start" letter-spacing="-0.3">%</text><text x="944.00" y="400.30" font-size="7.70" fill="#fff" font-weight="normal" text-anchor="start" letter-spacing="-0.3">Count</text><text x="779.00" y="416.80" font-size="7.70" fill="#333" font-weight="normal" text-anchor="start" letter-spacing="-0.3" stroke="#333" stroke-width="0.18">Top values</text><text x="786.50" y="433.00" font-size="7.70" fill="#333" font-weight="normal" text-anchor="start" letter-spacing="-0.3" stroke="#333" stroke-width="0.18">low</text><text x="900.60" y="433.00" font-size="7.70" fill="#333" font-weight="normal" text-anchor="start" letter-spacing="-0.3" stroke="#333" stroke-width="0.18">99.88%</text><text x="944.00" y="433.00" font-size="7.70" fill="#333" font-weight="normal" text-anchor="start" letter-spacing="-0.3" stroke="#333" stroke-width="0.18">4,028</text><text x="786.50" y="450.00" font-size="7.70" fill="#333" font-weight="normal" text-anchor="start" letter-spacing="-0.3" stroke="#333" stroke-width="0.18">critical</text><text x="900.60" y="450.00" font-size="7.70" fill="#333" font-weight="normal" text-anchor="start" letter-spacing="-0.3" stroke="#333" stroke-width="0.18">0.12%</text><text x="944.00" y="450.00" font-size="7.70" fill="#333" font-weight="normal" text-anchor="start" letter-spacing="-0.3" stroke="#333" stroke-width="0.18">5</text></svg>
</body></html>
